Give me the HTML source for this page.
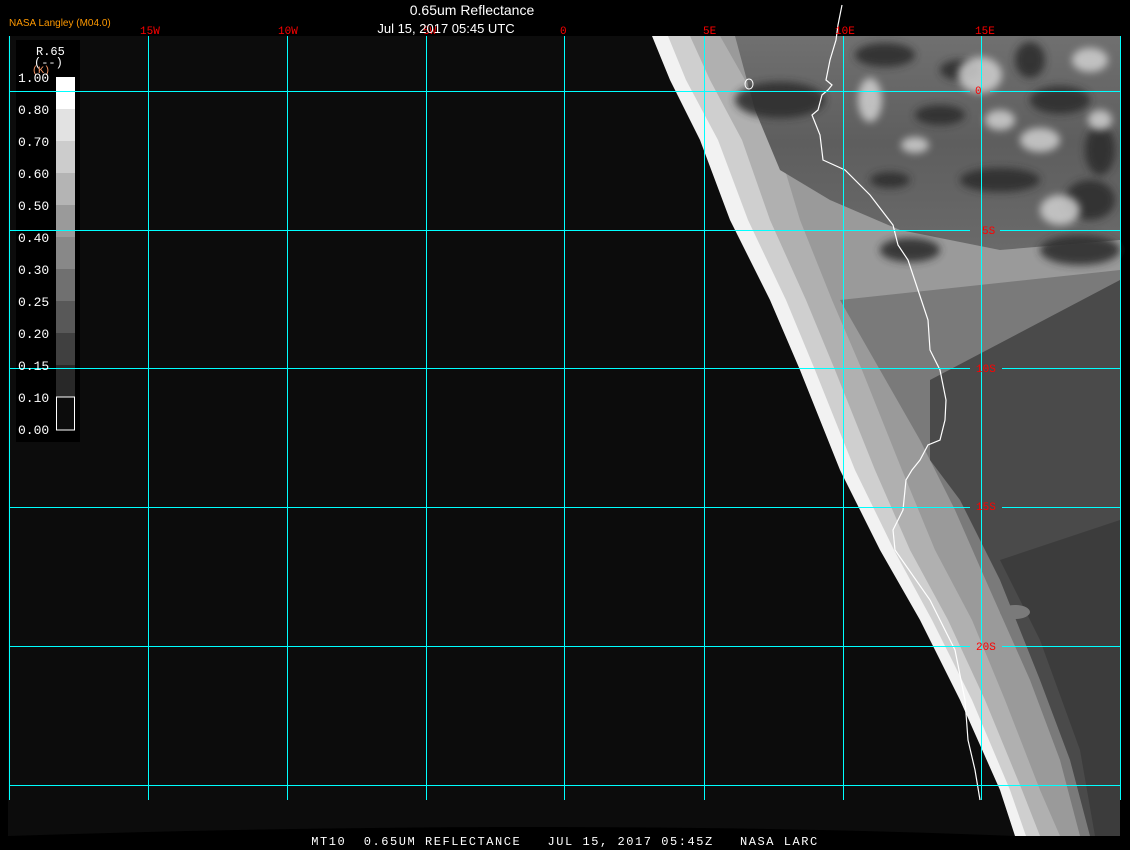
<!DOCTYPE html>
<html><head><meta charset="utf-8"><style>
html,body{margin:0;padding:0;background:#000;width:1130px;height:850px;overflow:hidden;position:relative}
svg{display:block}
.bt{position:absolute;left:0;width:1130px;top:835px;text-align:center;font-family:"Liberation Mono",monospace;font-size:12px;color:#fff;letter-spacing:1.55px;white-space:pre;line-height:15px}
</style></head><body>
<svg width="1130" height="850" xmlns="http://www.w3.org/2000/svg">
<defs>
<linearGradient id="top" x1="0" y1="0" x2="0" y2="1">
<stop offset="0" stop-color="#707070"/><stop offset="0.5" stop-color="#5e5e5e"/><stop offset="1" stop-color="#6a6a6a"/>
</linearGradient>
<filter id="bl"><feGaussianBlur stdDeviation="4"/></filter>
</defs>
<rect x="0" y="0" width="1130" height="850" fill="#000"/>
<path d="M8 36 H1120 V836 H1015 Q560 818 8 836 Z" fill="#0c0c0c"/>
<polygon points="652,36 1120,36 1120,836 1015,836 1000,790 960,700 920,620 880,550 840,470 800,370 770,300 730,220 700,140 670,80" fill="#f2f2f2"/>
<polygon points="668,36 1120,36 1120,836 1026,836 1010,790 972,700 932,620 894,550 855,470 815,370 786,300 748,220 718,140 686,80" fill="#cfcfcf"/>
<polygon points="690,36 1120,36 1120,836 1040,836 1022,790 985,700 948,620 910,550 875,470 835,370 806,300 770,220 742,140 710,80" fill="#b0b0b0"/>
<polygon points="720,36 1120,36 1120,836 1060,836 1040,790 1005,700 972,620 935,550 902,470 862,370 832,300 800,220 776,140 745,80" fill="#9a9a9a"/>
<polygon points="840,300 1120,270 1120,836 1080,836 1060,760 1030,680 990,590 955,510 920,440 880,370" fill="#7a7a7a"/>
<polygon points="930,380 1120,280 1120,836 1090,836 1070,760 1040,680 1000,580 960,500 930,460" fill="#4a4a4a"/>
<polygon points="1000,560 1120,520 1120,836 1095,836 1080,750 1040,640" fill="#3c3c3c"/>
<polygon points="735,36 1120,36 1120,240 1000,250 900,230 830,200 780,170 755,110" fill="url(#top)"/>
<g fill="#2e2e2e" opacity="0.9" filter="url(#bl)">
<ellipse cx="780" cy="100" rx="45" ry="18"/><ellipse cx="885" cy="55" rx="30" ry="12"/><ellipse cx="1000" cy="180" rx="40" ry="12"/>
<ellipse cx="940" cy="115" rx="25" ry="10"/><ellipse cx="1060" cy="100" rx="30" ry="14"/><ellipse cx="1090" cy="200" rx="25" ry="20"/>
<ellipse cx="910" cy="250" rx="30" ry="12"/><ellipse cx="1080" cy="250" rx="40" ry="15"/><ellipse cx="960" cy="70" rx="20" ry="10"/>
<ellipse cx="1030" cy="60" rx="15" ry="18"/><ellipse cx="890" cy="180" rx="20" ry="8"/><ellipse cx="1100" cy="150" rx="15" ry="25"/>
</g>
<g fill="#d0d0d0" opacity="0.85" filter="url(#bl)">
<ellipse cx="870" cy="100" rx="12" ry="22"/><ellipse cx="980" cy="75" rx="22" ry="18"/><ellipse cx="1090" cy="60" rx="18" ry="12"/>
<ellipse cx="1040" cy="140" rx="20" ry="12"/><ellipse cx="915" cy="145" rx="14" ry="8"/><ellipse cx="1100" cy="120" rx="12" ry="10"/>
<ellipse cx="1060" cy="210" rx="20" ry="15"/><ellipse cx="1000" cy="120" rx="15" ry="10"/>
</g>
<ellipse cx="1015" cy="612" rx="15" ry="7" fill="#7a7a7a"/>
<polyline fill="none" stroke="#fff" stroke-width="1.2" points="842,5 838,25 836,40 830,60 826,80 832,85 828,90 822,95 818,110 812,115 820,135 823,160 845,170 870,195 893,225 898,245 908,260 918,290 928,320 930,350 940,370 946,400 945,420 940,440 928,445 920,460 912,470 906,480 903,510 893,530 895,550 930,600 955,650 965,700 968,740 975,770 980,800"/>
<ellipse cx="749" cy="84" rx="4" ry="5" fill="none" stroke="#fff" stroke-width="1"/>
<g stroke="#0ff" stroke-width="1">
<line x1="9.5" y1="36" x2="9.5" y2="800"/><line x1="148.5" y1="36" x2="148.5" y2="800"/><line x1="287.5" y1="36" x2="287.5" y2="800"/>
<line x1="426.5" y1="36" x2="426.5" y2="800"/><line x1="564.5" y1="36" x2="564.5" y2="800"/><line x1="704.5" y1="36" x2="704.5" y2="800"/>
<line x1="843.5" y1="36" x2="843.5" y2="800"/><line x1="981.5" y1="36" x2="981.5" y2="800"/><line x1="1120.5" y1="36" x2="1120.5" y2="800"/>
<line x1="9" y1="91.5" x2="970" y2="91.5"/><line x1="990" y1="91.5" x2="1120" y2="91.5"/>
<line x1="9" y1="230.5" x2="970" y2="230.5"/><line x1="1000" y1="230.5" x2="1120" y2="230.5"/>
<line x1="9" y1="368.5" x2="970" y2="368.5"/><line x1="1002" y1="368.5" x2="1120" y2="368.5"/>
<line x1="9" y1="507.5" x2="970" y2="507.5"/><line x1="1002" y1="507.5" x2="1120" y2="507.5"/>
<line x1="9" y1="646.5" x2="970" y2="646.5"/><line x1="1002" y1="646.5" x2="1120" y2="646.5"/>
<line x1="9" y1="785.5" x2="1120" y2="785.5"/>
</g>
<g fill="#f00" font-family="Liberation Mono, monospace" font-size="11">
<text x="140" y="34">15W</text><text x="278" y="34">10W</text><text x="423" y="34">5W</text><text x="560" y="34">0</text>
<text x="703" y="34">5E</text><text x="835" y="34">10E</text><text x="975" y="34">15E</text>
<text x="975" y="94">0</text><text x="982" y="234">5S</text><text x="976" y="372">10S</text><text x="976" y="510">15S</text><text x="976" y="650">20S</text>
</g>
<rect x="16" y="40" width="64" height="402" fill="#000"/>
<g font-family="Liberation Mono, monospace" font-size="12" fill="#fff">
<text x="36" y="55">R.65</text><text x="34" y="66">(--)</text>
<text x="32" y="73" fill="#f96" font-size="10">(K)</text>
</g>
<g>
<rect x="56" y="77" width="19" height="32" fill="#fff"/>
<rect x="56" y="109" width="19" height="32" fill="#e2e2e2"/>
<rect x="56" y="141" width="19" height="32" fill="#cccccc"/>
<rect x="56" y="173" width="19" height="32" fill="#b4b4b4"/>
<rect x="56" y="205" width="19" height="32" fill="#9a9a9a"/>
<rect x="56" y="237" width="19" height="32" fill="#888"/>
<rect x="56" y="269" width="19" height="32" fill="#707070"/>
<rect x="56" y="301" width="19" height="32" fill="#585858"/>
<rect x="56" y="333" width="19" height="32" fill="#404040"/>
<rect x="56" y="365" width="19" height="32" fill="#282828"/>
<rect x="56.5" y="397" width="18" height="33" fill="#0c0c0c" stroke="#fff"/>
</g>
<g stroke="#0ff"><line x1="16" y1="91.5" x2="80" y2="91.5"/><line x1="16" y1="230.5" x2="80" y2="230.5"/><line x1="16" y1="368.5" x2="80" y2="368.5"/></g>
<g font-family="Liberation Mono, monospace" font-size="13" fill="#fff">
<text x="18" y="82">1.00</text><text x="18" y="114">0.80</text><text x="18" y="146">0.70</text><text x="18" y="178">0.60</text>
<text x="18" y="210">0.50</text><text x="18" y="242">0.40</text><text x="18" y="274">0.30</text><text x="18" y="306">0.25</text>
<text x="18" y="338">0.20</text><text x="18" y="370">0.15</text><text x="18" y="402">0.10</text><text x="18" y="434">0.00</text>
</g>
<text x="9" y="26" font-family="Liberation Sans, sans-serif" font-size="10" fill="#f90">NASA Langley (M04.0)</text>
<text x="472" y="15" text-anchor="middle" font-family="Liberation Sans, sans-serif" font-size="14" fill="#fff">0.65um Reflectance</text>
<text x="446" y="33" text-anchor="middle" font-family="Liberation Sans, sans-serif" font-size="13" fill="#fff">Jul 15, 2017 05:45 UTC</text>
</svg>
<div class="bt">MT10  0.65UM REFLECTANCE   JUL 15, 2017 05:45Z   NASA LARC</div>
</body></html>
